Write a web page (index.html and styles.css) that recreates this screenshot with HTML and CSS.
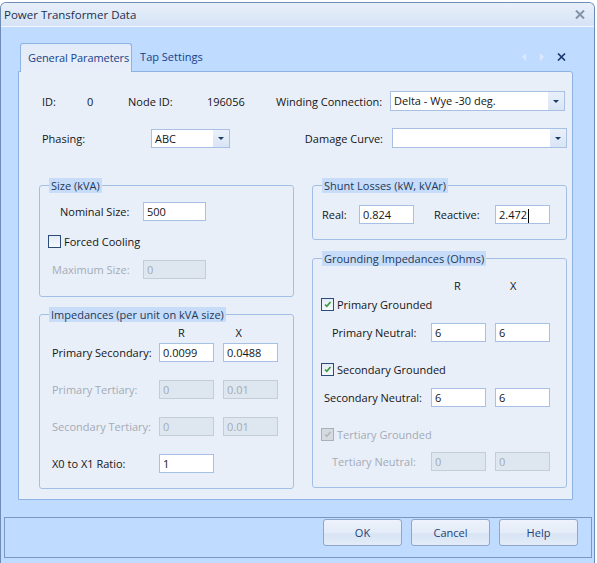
FILE: index.html
```html
<!DOCTYPE html>
<html lang="en">
<head>
  <meta charset="UTF-8">
  <title>Power Transformer Data</title>
  <link rel="stylesheet" href="styles.css">
</head>
<body>
  <div class="window">
    <div class="titlebar">
      <span class="title">Power Transformer Data</span>
      <svg class="title-close" width="10" height="9" viewBox="0 0 10 9">
        <path d="M1 0.5 L9 8.5 M9 0.5 L1 8.5" stroke="#8393a9" stroke-width="2"/>
      </svg>
    </div>

    <div class="tab-area">
      <div class="tabstrip">
        <div class="tab active">General Parameters</div>
        <div class="tab">Tap Settings</div>
        <div class="tab-tools">
          <svg width="5" height="8" viewBox="0 0 5 8"><path d="M4 0 L0 4 L4 8 Z" fill="#dce8fb"/></svg>
          <svg width="5" height="8" viewBox="0 0 5 8"><path d="M1 0 L5 4 L1 8 Z" fill="#dce8fb"/></svg>
          <svg class="page-close" width="9" height="8" viewBox="0 0 9 8">
            <path d="M1 0.5 L8 7.5 M8 0.5 L1 7.5" stroke="#1b3b73" stroke-width="1.7"/>
          </svg>
        </div>
      </div>

      <div class="tabpage">
        <div class="top-row row-ids">
          <span>ID:</span>
          <span>0</span>
          <span>Node ID:</span>
          <span>196056</span>
          <span>Winding Connection:</span>
          <div class="combo"><span class="combo-text">Delta - Wye -30 deg.</span><span class="combo-btn"></span></div>
        </div>
        <div class="top-row row-phasing">
          <span>Phasing:</span>
          <div class="combo combo-small"><span class="combo-text">ABC</span><span class="combo-btn"></span></div>
          <span class="right-label">Damage Curve:</span>
          <div class="combo"><span class="combo-text"></span><span class="combo-btn"></span></div>
        </div>

        <div class="columns">
          <div class="col">
            <fieldset class="group size-group">
              <legend>Size (kVA)</legend>
              <div class="row nominal-row">
                <span class="label">Nominal Size:</span>
                <div class="field wide">500</div>
              </div>
              <div class="row check-row cooling-row">
                <span class="check"></span>
                <span>Forced Cooling</span>
              </div>
              <div class="row max-row disabled">
                <span class="label">Maximum Size:</span>
                <div class="field wide">0</div>
              </div>
            </fieldset>

            <fieldset class="group imp-group">
              <legend>Impedances (per unit on kVA size)</legend>
              <div class="colhead imp-head"><span>R</span><span>X</span></div>
              <div class="row imp-row">
                <span class="label">Primary Secondary:</span>
                <div class="field">0.0099</div>
                <div class="field">0.0488</div>
              </div>
              <div class="row imp-row disabled">
                <span class="label">Primary Tertiary:</span>
                <div class="field">0</div>
                <div class="field">0.01</div>
              </div>
              <div class="row imp-row disabled">
                <span class="label">Secondary Tertiary:</span>
                <div class="field">0</div>
                <div class="field">0.01</div>
              </div>
              <div class="row imp-row">
                <span class="label">X0 to X1 Ratio:</span>
                <div class="field">1</div>
              </div>
            </fieldset>
          </div>

          <div class="col">
            <fieldset class="group shunt-group">
              <legend>Shunt Losses (kW, kVAr)</legend>
              <div class="row shunt-row">
                <span class="label real-label">Real:</span>
                <div class="field">0.824</div>
                <span class="label reactive-label">Reactive:</span>
                <div class="field">2.472<span class="caret"></span></div>
              </div>
            </fieldset>

            <fieldset class="group ground-group">
              <legend>Grounding Impedances (Ohms)</legend>
              <div class="colhead ground-head"><span>R</span><span>X</span></div>
              <div class="row check-row primary-check">
                <span class="check checked"><svg width="9" height="8" viewBox="0 0 9 8"><path d="M2 4.5 L3.8 6.3 L7.5 2" stroke="#3b9b3b" stroke-width="1.7" fill="none"/></svg></span>
                <span>Primary Grounded</span>
              </div>
              <div class="row neutral-row primary-neutral">
                <span class="label">Primary Neutral:</span>
                <div class="field">6</div>
                <div class="field">6</div>
              </div>
              <div class="row check-row secondary-check">
                <span class="check checked"><svg width="9" height="8" viewBox="0 0 9 8"><path d="M2 4.5 L3.8 6.3 L7.5 2" stroke="#3b9b3b" stroke-width="1.7" fill="none"/></svg></span>
                <span>Secondary Grounded</span>
              </div>
              <div class="row neutral-row secondary-neutral">
                <span class="label">Secondary Neutral:</span>
                <div class="field">6</div>
                <div class="field">6</div>
              </div>
              <div class="row check-row tertiary-check disabled">
                <span class="check checked"><svg width="9" height="8" viewBox="0 0 9 8"><path d="M2 4.5 L3.8 6.3 L7.5 2" stroke="#b4b9bf" stroke-width="1.7" fill="none"/></svg></span>
                <span>Tertiary Grounded</span>
              </div>
              <div class="row neutral-row tertiary-neutral disabled">
                <span class="label">Tertiary Neutral:</span>
                <div class="field">0</div>
                <div class="field">0</div>
              </div>
            </fieldset>
          </div>
        </div>
      </div>
    </div>

    <div class="buttonbar">
      <button class="btn">OK</button>
      <button class="btn">Cancel</button>
      <button class="btn">Help</button>
    </div>
  </div>
</body>
</html>
```

FILE: styles.css
```css
* {
  box-sizing: border-box;
}

body {
  margin: 0;
  background: #ffffff;
  font-family: "Open Sans", "Noto Sans", sans-serif;
  font-size: 11px;
  color: #151515;
}

/* window frame */
.window {
  width: 595px;
  height: 565px;
  margin-top: 2px;
  border: 1px solid #6d8cb8;
  border-bottom: none;
  border-radius: 6px 6px 0 0;
  background: #bfdbff;
  overflow: hidden;
}

.titlebar {
  height: 24px;
  display: flex;
  align-items: center;
  justify-content: space-between;
  padding: 0 9px 0 3px;
  background: linear-gradient(#e8eff9, #d5e3f6);
  border-bottom: 1px solid #f3f7fd;
  color: #1c2f4f;
  font-size: 11.5px;
}

.tab-area {
  padding: 16px 21px 0 17px;
}

/* tabs */
.tabstrip {
  display: flex;
  align-items: flex-end;
  height: 28px;
}

.tab {
  height: 28px;
  line-height: 27px;
  padding: 0 8px;
  white-space: nowrap;
  color: #15428b;
}

.tab.active {
  margin-left: 2px;
  padding: 0 2px 0 7px;
  height: 29px;
  margin-bottom: -1px;
  letter-spacing: -0.1px;
  background: linear-gradient(#e2ebf8, #e9eff9);
  border: 1px solid #8db2e3;
  border-bottom: none;
  border-radius: 3px 3px 0 0;
  position: relative;
  z-index: 1;
}

.tab-tools {
  margin-left: auto;
  height: 28px;
  display: flex;
  align-items: center;
  gap: 12px;
  padding-right: 7px;
}

.page-close {
  margin-left: 1px;
}

.tabpage {
  background: #e9eff9;
  border: 1px solid #8db2e3;
  border-radius: 0 3px 0 0;
  padding: 19px 5px 10px 20px;
}

/* top rows */
.top-row {
  display: grid;
  align-items: center;
  margin-left: 3px;
  height: 20px;
}

.row-ids {
  grid-template-columns: 45px 41px 79px 69px 114px 175px;
}

.row-phasing {
  margin-top: 17px;
  grid-template-columns: 109px 79px 1fr 175px;
}

.right-label {
  text-align: right;
  padding-right: 9px;
}

.combo {
  height: 20px;
  display: flex;
  background: #ffffff;
  border: 1px solid #a7c0e4;
}

.combo-small {
  height: 19px;
}

.combo-text {
  flex: 1;
  padding-left: 3px;
  line-height: 18px;
}

.combo-btn {
  width: 16px;
  background: linear-gradient(#e9f0fa, #d9e5f5);
  position: relative;
}

.combo-btn::after {
  content: "";
  position: absolute;
  left: 5px;
  top: 50%;
  margin-top: -1px;
  border-left: 3px solid transparent;
  border-right: 3px solid transparent;
  border-top: 3px solid #1e3a66;
}

/* group boxes */
.columns {
  display: grid;
  grid-template-columns: 255px 255px;
  column-gap: 18px;
  margin-top: 30px;
}

.group {
  margin: 0;
  padding: 0;
  min-width: 0;
  border: 1px solid #a3bfe5;
  border-radius: 3px;
}

.group legend {
  margin-left: 9px;
  padding: 0 2px;
  line-height: 15px;
  background: #c6dcf8;
  color: #1e395b;
}

.row {
  display: flex;
  align-items: center;
}

.field {
  width: 55px;
  height: 19px;
  line-height: 17px;
  padding-left: 3px;
  background: #ffffff;
  border: 1px solid #a7c0e4;
}

.field.wide {
  width: 63px;
}

.disabled {
  color: #a3abb6;
}

.disabled .field {
  background: #dee6f0;
  border-color: #c4ccd7;
}

.caret {
  display: inline-block;
  width: 1px;
  height: 14px;
  margin-left: 1px;
  vertical-align: middle;
  background: #000000;
}

.check {
  width: 13px;
  height: 13px;
  margin-right: 3px;
  border: 1px solid #2b4c78;
  background: linear-gradient(#e3ebf6, #f6f9fd);
  display: flex;
  align-items: center;
  justify-content: center;
}

.disabled .check {
  border-color: #a9b0b8;
  background: #d6dbe1;
}

.check-row {
  height: 14px;
}

/* size */
.size-group {
  padding-bottom: 17px;
}

.nominal-row {
  margin-top: 9px;
  padding-left: 20px;
}

.nominal-row .label {
  width: 83px;
}

.cooling-row {
  margin-top: 13px;
  padding-left: 8px;
}

.max-row {
  margin-top: 12px;
  padding-left: 12px;
}

.max-row .label {
  width: 91px;
}

/* impedances */
.imp-group {
  margin-top: 10px;
  padding-bottom: 15px;
}

.colhead {
  display: flex;
  height: 14px;
  line-height: 14px;
}

.colhead span {
  width: 64px;
}

.imp-head {
  margin-top: 4px;
  padding-left: 138px;
}

.imp-row {
  padding-left: 12px;
  margin-top: 18px;
}

.imp-head + .imp-row {
  margin-top: 3px;
}

.imp-row .label {
  width: 107px;
}

.imp-row .field {
  margin-right: 9px;
}

/* shunt losses */
.shunt-group {
  padding-bottom: 15px;
}

.shunt-row {
  margin-top: 12px;
  padding-left: 9px;
}

.real-label {
  width: 37px;
}

.reactive-label {
  width: 61px;
  margin-left: 20px;
}

/* grounding */
.ground-group {
  margin-top: 11px;
  padding-bottom: 16px;
}

.ground-head {
  margin-top: 13px;
  padding-left: 141px;
}

.primary-check {
  margin-top: 4px;
  padding-left: 8px;
}

.secondary-check,
.tertiary-check {
  margin-top: 20px;
  padding-left: 8px;
}

.neutral-row {
  margin-top: 12px;
}

.neutral-row .field {
  margin-right: 9px;
}

.primary-neutral,
.tertiary-neutral {
  padding-left: 19px;
}

.primary-neutral .label,
.tertiary-neutral .label {
  width: 99px;
}

.secondary-neutral {
  padding-left: 11px;
}

.secondary-neutral .label {
  width: 107px;
}

.tertiary-neutral {
  margin-top: 11px;
}

/* dialog buttons */
.buttonbar {
  margin: 17px 2px 0 3px;
  height: 41px;
  border: 1px solid #7b98c4;
  display: flex;
  justify-content: flex-end;
  align-items: flex-start;
  gap: 9px;
  padding: 1px 13px 0 0;
}

.btn {
  width: 79px;
  height: 27px;
  font-family: inherit;
  font-size: 11px;
  color: #1e3f7a;
  border: 1px solid #8ea6c9;
  border-radius: 3px;
  background: linear-gradient(#edf2fb 0%, #e4ecf8 50%, #d8e4f4 55%, #e3ecf8 100%);
}
```
